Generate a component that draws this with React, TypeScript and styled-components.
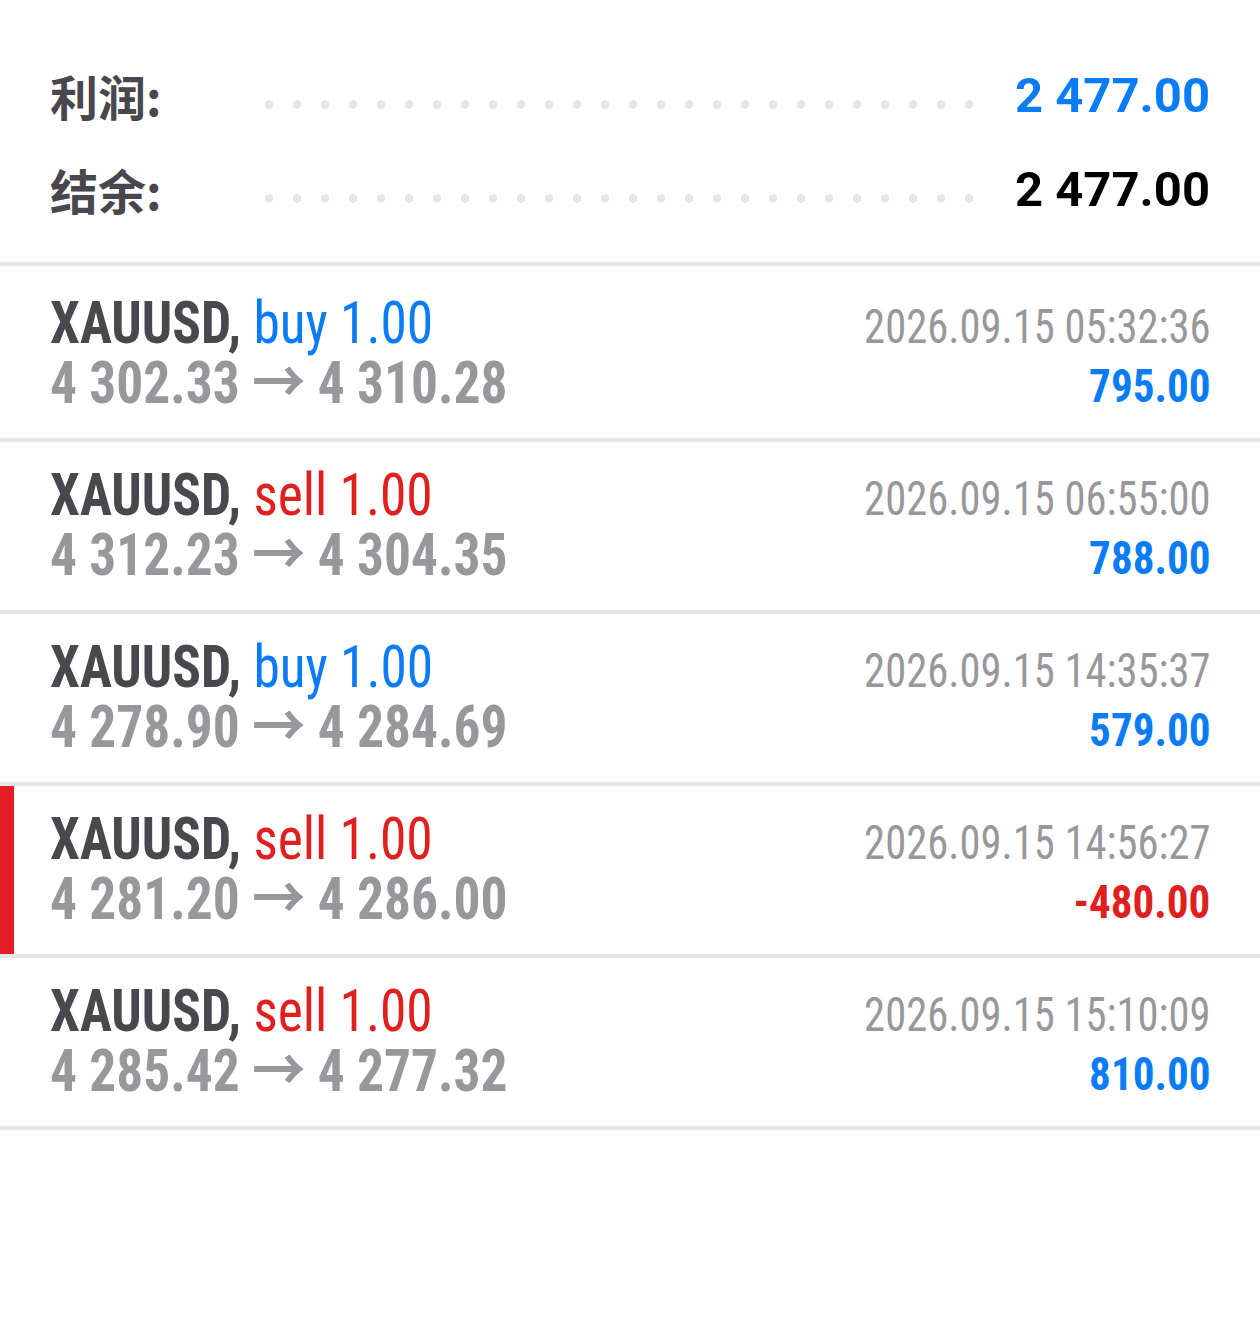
import React from 'react';
import styled, { createGlobalStyle } from 'styled-components';

const GlobalStyle = createGlobalStyle`
  html, body {
    margin: 0;
    padding: 0;
    background: #ffffff;
  }
  body {
    font-family: Roboto, 'Noto Sans CJK SC', sans-serif;
  }
`;

const Page = styled.div`
  width: 1260px;
  min-height: 1324px;
  background: #fff;
`;

const Summary = styled.section`
  padding: 65px 50px 43px 50px;
  margin-bottom: 4px;
  border-bottom: 4px solid #e6e6e6;
  display: flex;
  flex-direction: column;
  gap: 34px;
`;

const SummaryRow = styled.div`
  display: flex;
  align-items: center;
  height: 60px;
`;

const SummaryLabel = styled.span`
  font-family: 'Noto Sans CJK SC', sans-serif;
  font-weight: 700;
  font-size: 48px;
  line-height: 60px;
  color: #47474d;
  width: 205px;
  flex-shrink: 0;
`;

const Dots = styled.span`
  width: 728px;
  height: 9px;
  align-self: flex-start;
  margin-top: 35px;
  background-image: radial-gradient(circle at 14px 4.5px, #e6e6e6 4px, transparent 4.6px);
  background-size: 28px 9px;
  background-repeat: repeat-x;
`;

const SummaryValue = styled.span<{ $tone: 'blue' | 'black' }>`
  margin-left: auto;
  font-family: Roboto, 'Liberation Sans', sans-serif;
  font-weight: 700;
  font-size: 49px;
  color: ${p => (p.$tone === 'blue' ? '#0a7cf5' : '#000')};
`;

const TradeRow = styled.div<{ $marked?: boolean }>`
  display: flex;
  justify-content: space-between;
  height: 172px;
  padding: 0 50px;
  border-bottom: 4px solid #e6e6e6;
  box-sizing: border-box;
  box-shadow: ${p => (p.$marked ? 'inset 14px 0 0 #e31e24' : 'none')};
  font-family: 'Roboto Condensed', Roboto, 'Noto Sans CJK SC', sans-serif;
`;

const Col = styled.div<{ $right?: boolean }>`
  display: flex;
  flex-direction: column;
  align-items: ${p => (p.$right ? 'flex-end' : 'flex-start')};
  padding-top: ${p => (p.$right ? '29px' : '23px')};
`;

// the reference face is a touch narrower than Roboto Condensed
const Narrow = styled.div<{ $squeeze: number; $right?: boolean }>`
  white-space: nowrap;
  transform: scaleX(${p => p.$squeeze});
  transform-origin: ${p => (p.$right ? 'right' : 'left')} center;
`;

const Title = styled(Narrow)`
  font-size: 59px;
  line-height: 60px;
  color: #48484e;
`;

const Symbol = styled.span`
  font-weight: 700;
`;

const Side = styled.span<{ $side: 'buy' | 'sell' }>`
  color: ${p => (p.$side === 'buy' ? '#0a7cf5' : '#e0201f')};
`;

const Prices = styled(Narrow)`
  font-size: 59px;
  line-height: 60px;
  font-weight: 700;
  color: #98989c;
`;

const Arrow = styled.span`
  font-family: 'Noto Sans CJK SC', sans-serif;
  font-weight: 700;
  line-height: 0;
`;

const Time = styled(Narrow)`
  font-size: 48px;
  line-height: 56px;
  color: #98989c;
`;

const Profit = styled(Narrow)<{ $neg?: boolean }>`
  font-size: 47px;
  line-height: 62px;
  font-weight: 700;
  color: ${p => (p.$neg ? '#e0201f' : '#0a7cf5')};
`;

interface Trade {
  side: 'buy' | 'sell';
  open: string;
  close: string;
  time: string;
  profit: string;
  marked?: boolean;
}

const trades: Trade[] = [
  { side: 'buy', open: '4 302.33', close: '4 310.28', time: '2026.09.15 05:32:36', profit: '795.00' },
  { side: 'sell', open: '4 312.23', close: '4 304.35', time: '2026.09.15 06:55:00', profit: '788.00' },
  { side: 'buy', open: '4 278.90', close: '4 284.69', time: '2026.09.15 14:35:37', profit: '579.00' },
  { side: 'sell', open: '4 281.20', close: '4 286.00', time: '2026.09.15 14:56:27', profit: '-480.00', marked: true },
  { side: 'sell', open: '4 285.42', close: '4 277.32', time: '2026.09.15 15:10:09', profit: '810.00' },
];

const App: React.FC = () => (
  <Page>
    <GlobalStyle />
    <Summary>
      <SummaryRow>
        <SummaryLabel>利润:</SummaryLabel>
        <Dots />
        <SummaryValue $tone="blue">2 477.00</SummaryValue>
      </SummaryRow>
      <SummaryRow>
        <SummaryLabel>结余:</SummaryLabel>
        <Dots />
        <SummaryValue $tone="black">2 477.00</SummaryValue>
      </SummaryRow>
    </Summary>
    {trades.map((t, i) => (
      <TradeRow key={i} $marked={t.marked}>
        <Col>
          <Title $squeeze={0.905}>
            <Symbol>XAUUSD,</Symbol> <Side $side={t.side}>{t.side} 1.00</Side>
          </Title>
          <Prices $squeeze={0.905}>
            {t.open} <Arrow>→</Arrow> {t.close}
          </Prices>
        </Col>
        <Col $right>
          <Time $squeeze={0.887} $right>{t.time}</Time>
          <Profit $squeeze={0.916} $right $neg={t.profit.startsWith('-')}>
            {t.profit}
          </Profit>
        </Col>
      </TradeRow>
    ))}
  </Page>
);

export default App;
